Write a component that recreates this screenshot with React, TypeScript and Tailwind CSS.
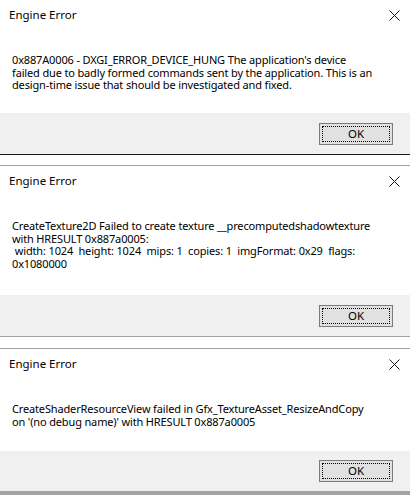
import React from "react";

type DialogProps = {
	lines: string[];
	bodyH: string;
	footerH: string;
	topBorder?: boolean;
	bottomClass: string;
};

const CloseIcon = () => (
	<svg width="11" height="11" viewBox="0 0 11 11" className="block">
		<path d="M0.5 0.5 L10.5 10.5 M10.5 0.5 L0.5 10.5" stroke="#111" strokeWidth="1" fill="none" />
	</svg>
);

const OkButton = () => (
	<button className="w-[74px] h-[22px] border border-[#7a7a7a] bg-[#e1e1e1] p-[2px] outline-none">
		<span className="flex h-full w-full items-center justify-center border border-dotted border-black text-[11.5px] text-black leading-none">
			OK
		</span>
	</button>
);

const Dialog = ({ lines, bodyH, footerH, topBorder, bottomClass }: DialogProps) => (
	<div className={`bg-white ${topBorder ? "border-t border-[#a3a3a3]" : ""} ${bottomClass}`}>
		<div className="flex h-[30px] items-center justify-between pl-[9px] pr-[10px] text-[11.5px] text-black">
			<span>Engine Error</span>
			<CloseIcon />
		</div>
		<div className={`${bodyH} pl-[12px] pr-[8px] pt-[24px] text-[11px] leading-[12.6px] tracking-[-0.15px] text-black whitespace-pre`}>
			{lines.map((l, i) => (
				<div key={i}>{l}</div>
			))}
		</div>
		<div className={`flex ${footerH} items-center justify-end bg-[#f0f0f0] pr-[17px]`}>
			<OkButton />
		</div>
	</div>
);

export default function App() {
	return (
		<div className="w-[410px] h-[496px] overflow-hidden bg-white font-['Noto_Sans',sans-serif]">
			<Dialog
				lines={[
					"0x887A0006 - DXGI_ERROR_DEVICE_HUNG The application's device",
					"failed due to badly formed commands sent by the application. This is an",
					"design-time issue that should be investigated and fixed.",
				]}
				bodyH="h-[83px]"
				footerH="h-[41px]"
				bottomClass="border-b border-[#1a1a1a]"
			/>
			<div className="h-[10px]" />
			<Dialog
				lines={[
					"CreateTexture2D Failed to create texture __precomputedshadowtexture",
					"with HRESULT 0x887a0005:",
					" width: 1024  height: 1024  mips: 1  copies: 1  imgFormat: 0x29  flags:",
					"0x1080000",
				]}
				bodyH="h-[99px]"
				footerH="h-[41px]"
				topBorder
				bottomClass="border-b border-[#a3a3a3]"
			/>
			<div className="h-[11px]" />
			<Dialog
				lines={[
					"CreateShaderResourceView failed in Gfx_TextureAsset_ResizeAndCopy",
					"on '(no debug name)' with HRESULT 0x887a0005",
				]}
				bodyH="h-[72px]"
				footerH="h-[40px]"
				topBorder
				bottomClass="border-b-4 border-[#a3a3a3]"
			/>
		</div>
	);
}
